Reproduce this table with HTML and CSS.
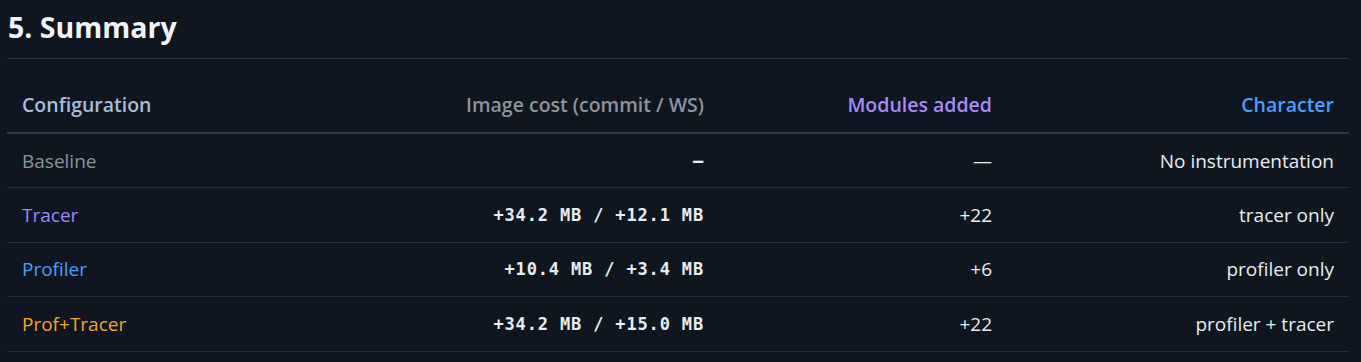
FILE: index.html
```html
<!DOCTYPE html>
<html lang="en">
<head>
<meta charset="utf-8">
<title>Summary</title>
<link rel="stylesheet" href="styles.css">
</head>
<body>
<section class="section">
  <h2 class="title">5. Summary</h2>
  <table class="summary">
    <colgroup>
      <col class="c1"><col class="c2"><col class="c3"><col class="c4">
    </colgroup>
    <thead>
      <tr>
        <th class="left h-config">Configuration</th>
        <th class="right h-cost">Image cost (commit / WS)</th>
        <th class="right h-mod">Modules added</th>
        <th class="right h-char">Character</th>
      </tr>
    </thead>
    <tbody>
      <tr>
        <td class="left name-base">Baseline</td>
        <td class="right mono">–</td>
        <td class="right">—</td>
        <td class="right">No instrumentation</td>
      </tr>
      <tr>
        <td class="left name-tracer">Tracer</td>
        <td class="right mono">+34.2 MB / +12.1 MB</td>
        <td class="right">+22</td>
        <td class="right">tracer only</td>
      </tr>
      <tr>
        <td class="left name-prof">Profiler</td>
        <td class="right mono">+10.4 MB / +3.4 MB</td>
        <td class="right">+6</td>
        <td class="right">profiler only</td>
      </tr>
      <tr>
        <td class="left name-both">Prof+Tracer</td>
        <td class="right mono">+34.2 MB / +15.0 MB</td>
        <td class="right">+22</td>
        <td class="right">profiler + tracer</td>
      </tr>
    </tbody>
  </table>
</section>
</body>
</html>
```
FILE: styles.css
```css
html, body {
  margin: 0;
  background: #0f1620;
}
body {
  padding: 0 12px 0 7px;
  font-family: "Open Sans", "Noto Sans", sans-serif;
  color: #e6edf3;
}
.section {
  padding-top: 8px;
}
.title {
  margin: 0;
  padding: 0 0 12px 1px;
  font-size: 28.5px;
  font-weight: 700;
  line-height: 38px;
  color: #f0f4f8;
  border-bottom: 1px solid #2a3444;
}
.summary {
  width: 100%;
  margin-top: 18px;
  border-collapse: collapse;
  font-size: 19px;
}
.c1 { width: 197px; }
.c2 { width: 515px; }
.c3 { width: 288px; }
.summary th,
.summary td {
  padding: 0 15px;
  height: 53.4px;
  border-bottom: 1px solid #232d3b;
}
.summary th {
  font-size: 19.5px;
  font-weight: 600;
  border-bottom: 2px solid #2c3646;
  height: 55px;
}
.left { text-align: left; }
.right { text-align: right; }
.h-config { color: #a9bdd6; }
.h-cost { color: #8b949e; }
.h-mod { color: #a48bf6; }
.h-char { color: #4a9eff; }
.name-base { color: #8b949e; }
.name-tracer { color: #9b87f5; }
.name-prof { color: #4a9eff; }
.name-both { color: #f5a524; }
.mono {
  font-family: "DejaVu Sans Mono", "Liberation Mono", monospace;
  font-size: 17px;
  letter-spacing: 0.85px;
  font-weight: 600;
}
```
